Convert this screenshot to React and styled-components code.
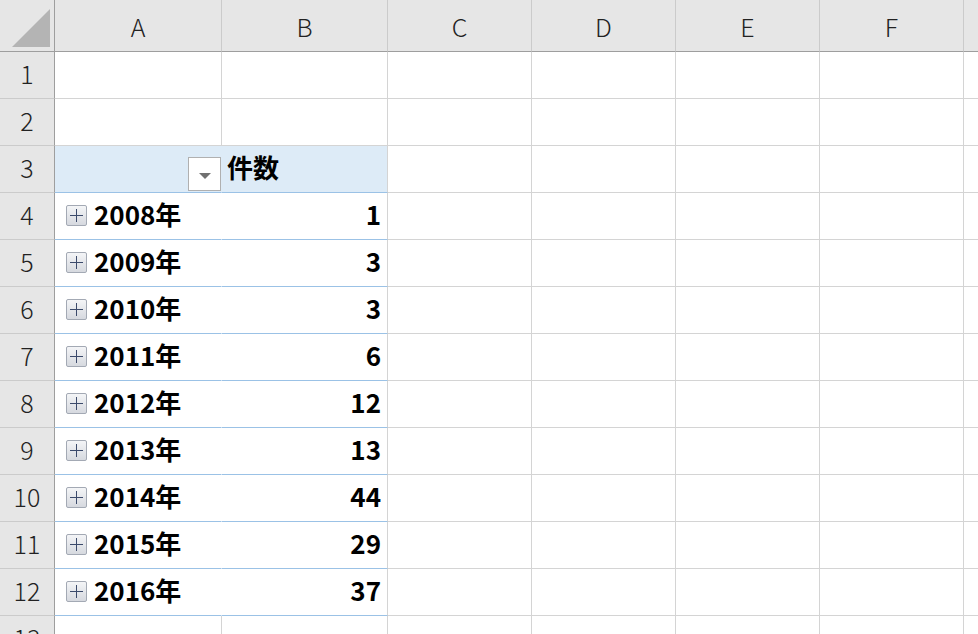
import React from "react";
import styled, { createGlobalStyle } from "styled-components";

const Global = createGlobalStyle`
  html, body { margin: 0; padding: 0; background: #fff; overflow: hidden; }
  body { font-family: "Noto Sans CJK JP", "Noto Sans", sans-serif; }
`;

const Sheet = styled.div`
  display: grid;
  grid-template-columns: 55px 167px 166px 144px 144px 144px 144px 100px;
  grid-auto-rows: 47px;
  grid-template-rows: 52px;
  width: 978px;
  height: 634px;
  overflow: hidden;
`;

const Corner = styled.div`
  background: #e6e6e6;
  border-right: 1px solid #9e9e9e;
  border-bottom: 1px solid #9e9e9e;
  position: relative;
  &::after {
    content: "";
    position: absolute;
    right: 4px;
    bottom: 4px;
    width: 0;
    height: 0;
    border-left: 38px solid transparent;
    border-bottom: 38px solid #b4b4b4;
  }
`;

const ColHead = styled.div`
  background: #e6e6e6;
  border-right: 1px solid #cbcbcb;
  border-bottom: 1px solid #9e9e9e;
  display: flex;
  align-items: center;
  justify-content: center;
  font-size: 25px;
  font-weight: 300;
  color: #222;
  padding-top: 0px;
`;

const RowHead = styled.div`
  background: #e6e6e6;
  border-right: 1px solid #9e9e9e;
  border-bottom: 1px solid #cbcbcb;
  display: flex;
  align-items: center;
  justify-content: center;
  font-size: 25px;
  font-weight: 300;
  color: #222;
  padding-bottom: 4px;
  box-sizing: border-box;
`;

const Cell = styled.div`
  border-right: 1px solid ${(p) => (p.$noRight ? "transparent" : "#d4d4d4")};
  border-bottom: 1px solid ${(p) => (p.$pivot ? "#9bc2e6" : "#d4d4d4")};
  background: ${(p) => (p.$head ? "#ddebf7" : "#fff")};
  display: flex;
  align-items: center;
  justify-content: ${(p) => (p.$right ? "flex-end" : "flex-start")};
  padding: 0 ${(p) => (p.$right ? "6px" : "0")} 5px ${(p) => (p.$right ? "0" : "11px")};
  font-size: 26px;
  font-weight: 700;
  color: #000;
  gap: 7px;
  box-sizing: border-box;
  min-width: 0;
`;

const Plus = styled.span`
  width: 21px;
  height: 21px;
  box-sizing: border-box;
  border: 1px solid #a3a9b4;
  border-radius: 2px;
  background: linear-gradient(#f4f5f7, #d6d9df);
  position: relative;
  flex: none;
  margin-top: 3px;
  &::before, &::after {
    content: "";
    position: absolute;
    background: #3b4a6b;
  }
  &::before { left: 3px; right: 3px; top: 9px; height: 1px; }
  &::after { top: 3px; bottom: 3px; left: 9px; width: 1px; }
`;

const Dropdown = styled.span`
  margin-left: auto;
  margin-top: 15px;
  width: 33px;
  height: 34px;
  box-sizing: border-box;
  border: 1px solid #b0b0b0;
  background: #fff;
  display: flex;
  align-items: center;
  justify-content: center;
  &::after {
    content: "";
    border-left: 6px solid transparent;
    border-right: 6px solid transparent;
    border-top: 6px solid #707070;
    margin-top: 3px;
  }
`;

const HeadLabel = styled.span`
  padding-left: 0;
  margin-left: -6px;
`;

const cols = ["A", "B", "C", "D", "E", "F", ""];
const data = [
  ["2008年", 1], ["2009年", 3], ["2010年", 3], ["2011年", 6], ["2012年", 12],
  ["2013年", 13], ["2014年", 44], ["2015年", 29], ["2016年", 37],
];

export default function App() {
  const rows = [];
  for (let r = 1; r <= 13; r++) {
    rows.push(<RowHead key={"h" + r}>{r}</RowHead>);
    if (r === 3) {
      rows.push(<Cell key="a3" $head $pivot $noRight><Dropdown /></Cell>);
      rows.push(<Cell key="b3" $head $pivot><HeadLabel>件数</HeadLabel></Cell>);
    } else if (r >= 4 && r <= 12) {
      const [y, v] = data[r - 4];
      rows.push(<Cell key={"a" + r} $pivot $noRight><Plus />{y}</Cell>);
      rows.push(<Cell key={"b" + r} $pivot $right>{v}</Cell>);
    } else {
      rows.push(<Cell key={"a" + r} />);
      rows.push(<Cell key={"b" + r} />);
    }
    for (let c = 0; c < 5; c++) rows.push(<Cell key={r + "-" + c} />);
  }
  return (
    <>
      <Global />
      <Sheet>
        <Corner />
        {cols.map((c, i) => <ColHead key={i}>{c}</ColHead>)}
        {rows}
      </Sheet>
    </>
  );
}
